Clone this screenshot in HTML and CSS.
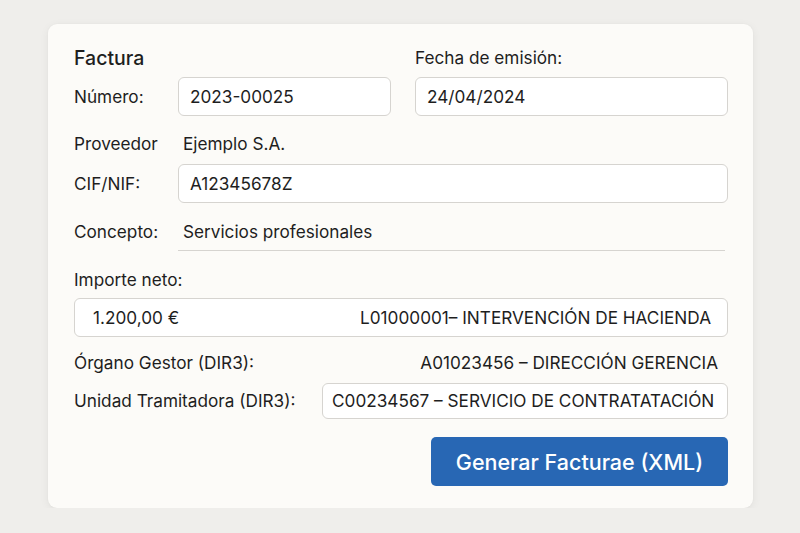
FILE: index.html
```html
<!DOCTYPE html>
<html lang="es">
<head>
<meta charset="utf-8">
<title>Factura</title>
<link rel="stylesheet" href="styles.css">
</head>
<body>
<main class="card">
  <section class="top-grid">
    <div class="title">Factura</div>
    <div></div>
    <div class="label right-col">Fecha de emisión:</div>

    <div class="label">Número:</div>
    <div class="input">2023-00025</div>
    <div class="input right-col">24/04/2024</div>
  </section>

  <section class="rows">
    <div class="row row-plain">
      <div class="label">Proveedor</div>
      <div class="plain">Ejemplo S.A.</div>
    </div>
    <div class="row row-cif">
      <div class="label">CIF/NIF:</div>
      <div class="input wide">A12345678Z</div>
    </div>
    <div class="row row-concepto">
      <div class="label">Concepto:</div>
      <div class="underline">Servicios profesionales</div>
    </div>
  </section>

  <section class="importe">
    <div class="label">Importe neto:</div>
    <div class="input split">
      <span>1.200,00 €</span>
      <span>L01000001– INTERVENCIÓN DE HACIENDA</span>
    </div>
  </section>

  <section class="dir3">
    <div class="row-between">
      <div class="label">Órgano Gestor (DIR3):</div>
      <div class="value-right">A01023456 – DIRECCIÓN GERENCIA</div>
    </div>
    <div class="row-between unidad">
      <div class="label">Unidad Tramitadora (DIR3):</div>
      <div class="input small">C00234567 – SERVICIO DE CONTRATATACIÓN</div>
    </div>
  </section>

  <div class="actions">
    <button class="btn" type="button">Generar Facturae (XML)</button>
  </div>
</main>
</body>
</html>
```

FILE: styles.css
```css
* { box-sizing: border-box; }

html, body {
  margin: 0;
  padding: 0;
}

body {
  background: #efeeeb;
  font-family: "Inter", "Noto Sans", "Liberation Sans", sans-serif;
  color: #1e1e1e;
  font-size: 17.2px;
  padding: 24px 47px 0 48px;
}

.card {
  background: #fcfbf8;
  border-radius: 9px;
  box-shadow: 0 2px 10px rgba(0, 0, 0, 0.06), 0 0 2px rgba(0, 0, 0, 0.04);
  padding: 24px 25px 22px 26px;
  height: 484px;
}

.label {
  line-height: 20px;
  white-space: nowrap;
}

.title {
  font-size: 19.5px;
  font-weight: 500;
  line-height: 20px;
}

.top-grid {
  display: grid;
  grid-template-columns: 104px 213px 1fr;
  row-gap: 9px;
  align-items: center;
}

.right-col {
  margin-left: 24px;
}

.input {
  height: 39px;
  background: #ffffff;
  border: 1px solid #d6d4d0;
  border-radius: 6px;
  display: flex;
  align-items: center;
  padding: 0 11px;
  line-height: 20px;
  white-space: nowrap;
}

.rows {
  display: flex;
  flex-direction: column;
  margin-top: 18px;
}

.row {
  display: flex;
  align-items: center;
}

.row .label {
  width: 104px;
  flex: none;
}

.plain {
  padding-left: 5px;
  line-height: 20px;
}

.row-cif {
  margin-top: 10px;
}

.wide {
  flex: 1;
}

.row-concepto {
  margin-top: 10px;
  align-items: stretch;
}

.row-concepto .label {
  display: flex;
  align-items: center;
  padding-bottom: 1px;
}

.underline {
  flex: 1;
  height: 38px;
  display: flex;
  align-items: center;
  padding-left: 5px;
  margin-right: 3px;
  border-bottom: 1px solid #d6d4d0;
}

.importe {
  margin-top: 19px;
  display: flex;
  flex-direction: column;
  gap: 8px;
}

.split {
  justify-content: space-between;
  padding: 0 16px 0 18px;
}

.dir3 {
  margin-top: 16px;
  display: flex;
  flex-direction: column;
  gap: 10px;
}

.row-between {
  display: flex;
  align-items: center;
  justify-content: space-between;
}

.value-right {
  line-height: 20px;
  margin-right: 10px;
}

.small {
  height: 36px;
  width: 406px;
  padding: 0 9px;
}

.actions {
  display: flex;
  justify-content: flex-end;
  margin-top: 18px;
}

.btn {
  width: 297px;
  height: 49px;
  border: none;
  border-radius: 5px;
  background: #2867b4;
  color: #ffffff;
  font-family: "Inter", "Noto Sans", "Liberation Sans", sans-serif;
  font-size: 21.5px;
  font-weight: 500;
  cursor: pointer;
}
```
